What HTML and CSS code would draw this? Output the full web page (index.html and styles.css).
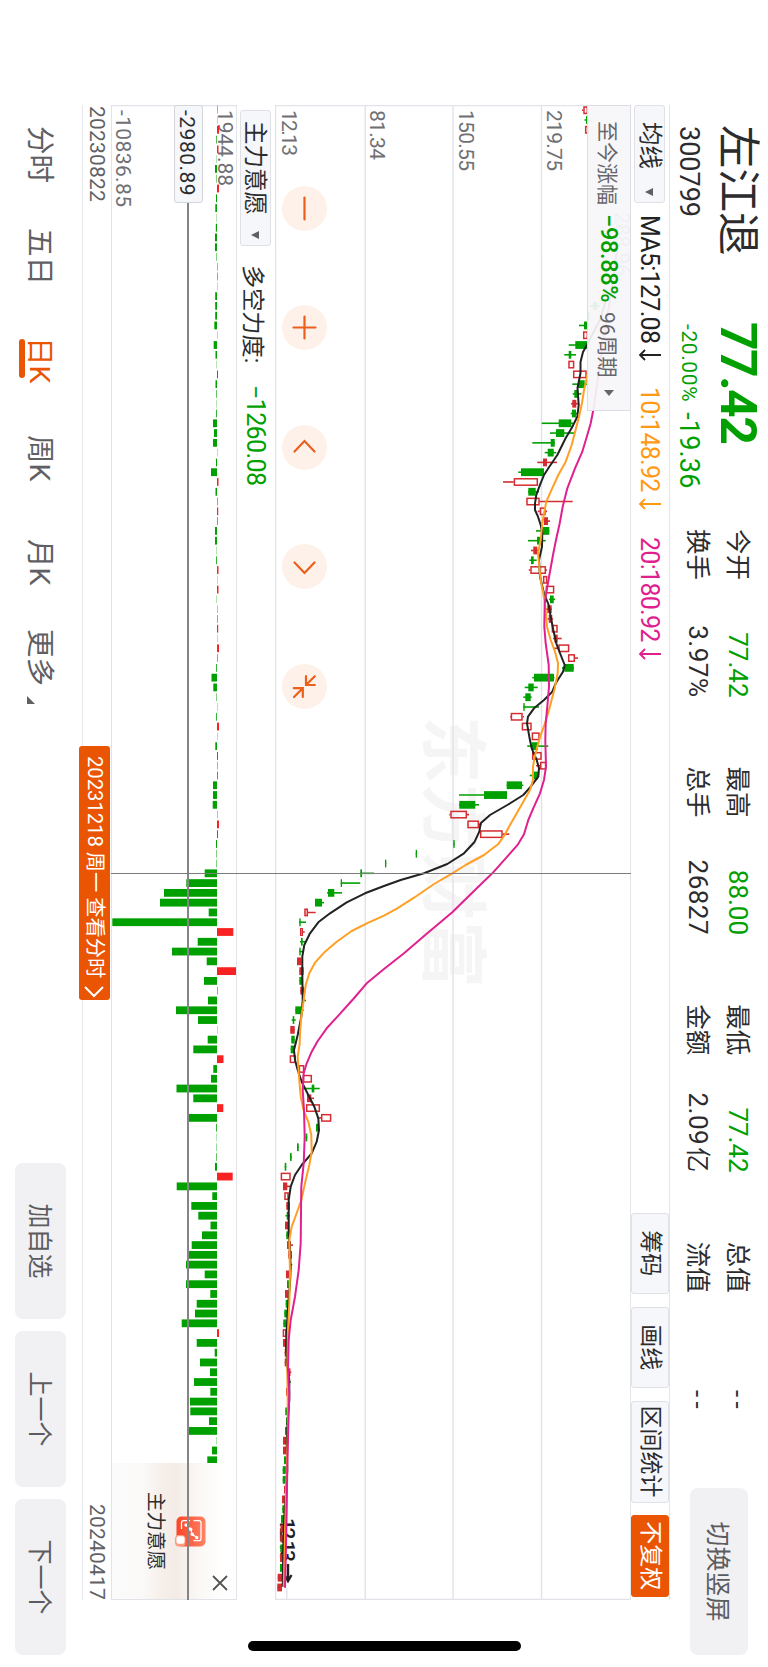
FILE: index.html
```html
<!DOCTYPE html>
<html lang="zh-CN">
<head>
    <meta charset="UTF-8">
    <meta name="viewport" content="width=device-width, initial-scale=1.0">
    <title>左江退 300799</title>
    <link rel="stylesheet" href="styles.css">
</head>
<body>
    <div class="phone">
    <div class="screen">
        <header class="header">
            <div class="stock">
                <div class="stock-name">左江退</div>
                <div class="stock-code">300799</div>
            </div>
            <div class="quote green">
                <div class="price">77.42</div>
                <div class="change"><span class="percent">-20.00%</span><span>-19.36</span></div>
            </div>
            <div class="stats">
                <div class="stat"><span>今开</span><span class="green">77.42</span></div>
                <div class="stat"><span>最高</span><span class="green">88.00</span></div>
                <div class="stat"><span>最低</span><span class="green">77.42</span></div>
                <div class="stat"><span>总值</span><span class="empty">--</span></div>
                <div class="stat"><span>换手</span><span class="spaced">3.97%</span></div>
                <div class="stat"><span>总手</span><span class="spaced">26827</span></div>
                <div class="stat"><span>金额</span><span class="spaced">2.09<span class="unit">亿</span></span></div>
                <div class="stat"><span>流值</span><span class="empty">--</span></div>
            </div>
            <button class="gray-button switch-button">切换竖屏</button>
        </header>

        <main class="main">
            <div class="toolbar">
                <button class="select">均线<i class="caret"></i></button>
                <div class="ma ma5">MA5:127.08<svg width="12" height="24" viewBox="0 0 12 24"><path d="M6 1V22M1 17L6 22L11 17"/></svg></div>
                <div class="ma ma10">10:148.92<svg width="12" height="24" viewBox="0 0 12 24"><path d="M6 1V22M1 17L6 22L11 17"/></svg></div>
                <div class="ma ma20">20:180.92<svg width="12" height="24" viewBox="0 0 12 24"><path d="M6 1V22M1 17L6 22L11 17"/></svg></div>
                <div class="tools">
                    <button class="tool">筹码</button>
                    <button class="tool">画线</button>
                    <button class="tool wide">区间统计</button>
                    <button class="tool active">不复权</button>
                </div>
            </div>

            <div class="chart">
                <svg id="kline" width="1495" height="356" viewBox="105 137 1495 356">
                    <text class="watermark" x="716" y="339" textLength="272">东方财富</text>
                    <g class="grid">
                        <path d="M105 137.2H1600M105 226.5H1600M105 315H1600M105 402.7H1600M105 492.5H1600M105.5 137V493M1599.5 137V493M1588 481.3H1600"/>
                    </g>
                    <g class="axis">
                        <text x="110" y="221" textLength="61">219.75</text>
                        <text x="110" y="309" textLength="61">150.55</text>
                        <text x="110" y="398" textLength="50">81.34</text>
                        <text x="110" y="486" textLength="46">12.13</text>
                    </g>
                    <text class="mark faint" x="212" y="153" textLength="64">288.96</text>
                    <text class="mark" x="1518" y="488" textLength="44">12.13</text>
                    <path class="mark-arrow" d="M1564 480H1580M1575 476.5L1581 480L1575 483.5"/>
                    <g id="candles"></g>
                    <g id="lines"></g>
                </svg>
                <div class="range">
                    <span>至今涨幅</span><b class="green">−98.88%</b><span>96周期</span><i class="next"></i>
                </div>
                <div class="zoom">
                    <svg width="45" height="45" viewBox="-22.5 -22.5 45 45"><path d="M-11 0H11"/></svg>
                    <svg width="45" height="45" viewBox="-22.5 -22.5 45 45"><path d="M-11 0H11M0 -11V11"/></svg>
                    <svg width="45" height="45" viewBox="-22.5 -22.5 45 45"><path d="M4 -10L-6.5 0L4 10"/></svg>
                    <svg width="45" height="45" viewBox="-22.5 -22.5 45 45"><path d="M-4 -10L6.5 0L-4 10"/></svg>
                    <svg width="45" height="45" viewBox="-22.5 -22.5 45 45"><path d="M-10.3 -1.5H-1.5V-10.3M-10.3 -10.3L-1.5 -1.5M1.7 10.7V1.7H10.5M10.5 10.5L1.7 1.7"/></svg>
                </div>
            </div>

            <div class="toolbar sub-toolbar">
                <button class="select">主力意愿<i class="caret"></i></button>
                <span class="force-label">多空力度:</span>
                <span class="force green">−1260.08</span>
            </div>

            <div class="chart">
                <svg id="force" width="1495" height="126" viewBox="105 531 1495 126">
                    <g class="grid">
                        <path d="M105 531.2H1600M105 656.7H1600M105.5 531V657M1599.5 531V657"/>
                    </g>
                    <g class="axis">
                        <text x="110" y="550" textLength="76">1944.88</text>
                        <text x="110" y="652" textLength="97">-10836.85</text>
                    </g>
                    <g id="bars"></g>
                </svg>
                <div class="promo">
                    <svg class="promo-icon" width="31" height="31" viewBox="0 0 31 31">
                        <defs>
                            <linearGradient id="fire" x1="0" y1="0" x2="0" y2="1">
                                <stop offset="0" stop-color="#ff8264"/>
                                <stop offset="1" stop-color="#fb4428"/>
                            </linearGradient>
                        </defs>
                        <rect x="0.5" y="0.5" width="30" height="29" rx="5" fill="url(#fire)"/>
                        <path d="M4.7 16V22.5Q4.7 24.5 7 24.5H13M4.7 12.5V7Q4.7 5 7 5H22.5Q24.7 5 24.7 7V12.5" fill="none" stroke="#fff" stroke-width="1.3"/>
                        <path d="M9 20L13.3 15.3L18.3 13.7L21.5 9.3" fill="none" stroke="#fff" stroke-width="1.1"/>
                        <circle cx="9" cy="20" r="1.7" fill="#fff"/><circle cx="13.3" cy="15.3" r="1.7" fill="#fff"/>
                        <circle cx="18.3" cy="13.7" r="1.7" fill="#fff"/><circle cx="21.5" cy="9.3" r="1.7" fill="#fff"/>
                        <rect x="19" y="20.5" width="11.5" height="10.5" rx="4" fill="#ff9c80"/>
                        <rect x="20.3" y="21.5" width="7.5" height="8" rx="2" fill="#fff"/>
                    </svg>
                    <span>主力意愿</span>
                    <svg class="close" width="16" height="16" viewBox="0 0 16 16"><path d="M1 1L15 15M15 1L1 15"/></svg>
                </div>
                <div class="cross-line"></div>
                <div class="cross-value">-2980.89</div>
            </div>

            <div class="dates">
                <span>20230822</span><span>20240417</span>
                <div class="day-tag">20231218 周一 查看分时<svg width="12" height="20" viewBox="0 0 12 20"><path d="M1 1L10 10L1 19"/></svg></div>
            </div>
            <div class="cross-day"></div>
        </main>

        <footer class="footer">
            <nav class="tabs">
                <span>分时</span>
                <span>五日</span>
                <span class="current">日K</span>
                <span>周K</span>
                <span>月K</span>
                <span>更多<i class="corner"></i></span>
            </nav>
            <div class="actions">
                <button class="gray-button">加自选</button>
                <button class="gray-button">上一个</button>
                <button class="gray-button">下一个</button>
            </div>
        </footer>

        <div class="home-bar"></div>
    </div>
    </div>
    <script src="script.js"></script>
</body>
</html>
```
FILE: styles.css
```css
body {
    margin: 0;
    background-color: #fff;
}
.phone {
    position: relative;
    width: 768px;
    height: 1667px;
    overflow: hidden;
}
/* landscape layout, turned a quarter clockwise */
.screen {
    position: relative;
    width: 1667px;
    height: 768px;
    transform-origin: 0 0;
    transform: translateX(768px) rotate(90deg);
    background-color: #fff;
    color: #2c2c2e;
    font-family: Roboto, "Noto Sans CJK SC", sans-serif;
    font-size: 26px;
}
button {
    margin: 0;
    padding: 0;
    border: none;
    color: inherit;
    font-family: inherit;
}
.green {
    color: #00a000;
}

.header {
    display: flex;
    box-sizing: border-box;
    height: 98px;
    padding: 6px 12px 0 125px;
}
.stock {
    width: 197px;
}
.stock-name {
    font-size: 43.5px;
    line-height: 49px;
    height: 49px;
}
.stock-code {
    padding-left: 1px;
    font-size: 27px;
    line-height: 49px;
}
.quote {
    width: 207px;
}
.price {
    font-size: 50px;
    font-weight: bold;
    line-height: 49px;
    letter-spacing: -1.6px;
}
.change {
    display: flex;
    gap: 10px;
    padding-left: 2px;
    font-size: 27px;
    line-height: 49px;
    letter-spacing: 0.2px;
}
.percent {
    font-size: 21px;
    letter-spacing: 0.6px;
}
.stats {
    display: grid;
    grid-template-columns: repeat(4, 168.5px);
    grid-template-rows: 39.5px 39.5px;
    column-gap: 69.1px;
    padding-top: 5px;
}
.stat {
    display: flex;
    justify-content: space-between;
    font-size: 26px;
    line-height: 39.5px;
}
.stat > span:first-child {
    font-size: 25.5px;
}
.spaced {
    letter-spacing: 0.5px;
}
.unit {
    margin-left: 2px;
    font-size: 25px;
}
.empty {
    letter-spacing: 4.5px;
    margin-right: -3px;
}
.gray-button {
    padding-bottom: 2px;
    background-color: #f1f1f4;
    border-radius: 8px;
    color: #5c5c60;
    font-size: 25px;
}
.switch-button {
    width: 167px;
    height: 58px;
    margin: 14px 0 0 auto;
}

.main {
    position: relative;
    width: 1495px;
    margin-left: 105px;
}
.toolbar {
    display: flex;
    align-items: center;
    box-sizing: border-box;
    height: 39px;
    border-top: 1px solid #e4e4ea;
}
.select {
    display: flex;
    align-items: center;
    justify-content: space-between;
    box-sizing: border-box;
    width: 98px;
    height: 31px;
    padding: 1px 6px 0 16px;
    background-color: #f6f7fa;
    border: 1px solid #dfe1e6;
    border-radius: 3px;
    font-size: 23.5px;
    line-height: 29px;
}
.caret {
    border: 4.5px solid transparent;
    border-top: 8px solid #606064;
    border-bottom: none;
}
.ma {
    display: flex;
    align-items: center;
    gap: 6px;
    font-size: 25px;
    line-height: 37px;
    width: 150px;
    letter-spacing: -0.7px;
}
.ma svg {
    fill: none;
    stroke: currentColor;
    stroke-width: 1.8;
}
.ma5 {
    margin-left: 12px;
    width: 172px;
    color: #222;
}
.ma10 {
    color: #ff9a17;
}
.ma20 {
    color: #e0208f;
}
.tools {
    display: flex;
    gap: 12.5px;
    margin-left: auto;
    margin-right: 3.5px;
}
.tool {
    box-sizing: border-box;
    width: 81.5px;
    height: 38px;
    background-color: #f6f7fa;
    border: 1px solid #dfe1e6;
    border-radius: 3px;
    font-size: 23px;
    line-height: 34px;
}
.tool.wide {
    width: 102px;
}
.tool.active {
    background-color: #ea5504;
    border-color: #ea5504;
    color: #fff;
}

.chart {
    position: relative;
}
.chart > svg {
    display: block;
}
.grid path {
    fill: none;
    stroke: #e2e2e9;
    stroke-width: 1.4;
}
.axis text {
    fill: #707074;
    font-size: 21px;
}
.mark {
    fill: #222;
    font-size: 21px;
    font-weight: 500;
}
.mark.faint {
    fill: #999;
    font-weight: normal;
}
.mark-arrow {
    fill: none;
    stroke: #222;
    stroke-width: 2.4;
}
.watermark {
    fill: #f5f5f6;
    font-size: 67px;
    font-weight: bold;
}
#lines polyline {
    fill: none;
    stroke-width: 2;
    stroke-linejoin: round;
}
.range {
    position: absolute;
    top: 0;
    left: 0;
    display: flex;
    align-items: center;
    box-sizing: border-box;
    width: 306px;
    height: 44px;
    padding-left: 15px;
    background-color: rgba(246, 246, 250, 0.93);
    border: 1px solid #dcdce4;
    color: #66666a;
    font-size: 21px;
}
.range b {
    width: 90px;
    margin: 0 8px 0 9px;
    font-size: 23.5px;
    font-weight: 500;
    letter-spacing: -0.3px;
}
.next {
    margin-left: 12px;
    border: 5px solid transparent;
    border-left: 6px solid #66666a;
    border-right: none;
}
.zoom {
    position: absolute;
    top: 304px;
    left: 80.5px;
    display: flex;
    gap: 74.5px;
}
.zoom svg {
    background-color: #fef1ea;
    border-radius: 50%;
    fill: none;
    stroke: #ea5f1c;
    stroke-width: 2.2;
    stroke-linecap: round;
}

.sub-toolbar {
    height: 38px;
    padding-left: 5px;
    border-top: none;
}
.sub-toolbar .select {
    width: 136px;
    padding: 2px 6px 0 10px;
}
.force-label {
    width: 120px;
    margin-left: 19px;
    padding-top: 2px;
    font-size: 23.2px;
}
.force {
    padding-top: 1px;
    font-size: 25px;
    letter-spacing: -0.6px;
}
.cross-line {
    position: absolute;
    top: 48px;
    left: 98px;
    right: 0;
    height: 2px;
    background-color: #858587;
}
.cross-value {
    position: absolute;
    top: 34px;
    left: 0;
    box-sizing: border-box;
    width: 98px;
    height: 29px;
    padding-left: 4px;
    background-color: #f6f7fa;
    border: 1px solid #d4d6de;
    border-radius: 3px;
    font-size: 21px;
    line-height: 30px;
    letter-spacing: 0.5px;
}
.cross-day {
    position: absolute;
    top: 39px;
    left: 767.5px;
    width: 1.6px;
    height: 520px;
    background-color: #7c7c7e;
}
.promo {
    position: absolute;
    top: 1px;
    right: 1px;
    display: flex;
    flex-direction: column;
    align-items: center;
    box-sizing: border-box;
    width: 136px;
    height: 124px;
    padding-top: 30px;
    background: linear-gradient(#fff 10%, #fbf8f6 30%, #f4ebe6 48%, #f6efea 60%, #fbf9f8 75%, #fbfbfb);
    font-size: 19.5px;
    line-height: 39px;
}
.promo-icon {
    margin-right: -1px;
}
.close {
    position: absolute;
    top: 8px;
    right: 8px;
    stroke: #555;
    stroke-width: 1.8;
}
.dates {
    position: relative;
    display: flex;
    justify-content: space-between;
    box-sizing: border-box;
    height: 29px;
    padding-left: 1px;
    border-bottom: 1px solid #e6e6ec;
    color: #606064;
    font-size: 21px;
    line-height: 29px;
    letter-spacing: 0.2px;
}
.day-tag {
    position: absolute;
    top: 1px;
    left: 641px;
    display: flex;
    align-items: center;
    gap: 8px;
    box-sizing: border-box;
    width: 254px;
    height: 31px;
    padding-left: 10px;
    background-color: #ea5504;
    border-radius: 3px;
    color: #fff;
    font-size: 20.3px;
    letter-spacing: -0.05px;
    white-space: nowrap;
}
.day-tag svg {
    fill: none;
    stroke: #fff;
    stroke-width: 2;
}

.footer {
    display: flex;
    justify-content: space-between;
    align-items: center;
    height: 82px;
    padding: 0 12px 0 126px;
}
.tabs {
    display: grid;
    grid-template-columns: 102px 109px 98px 104px 90px 90px;
    padding-top: 3px;
    color: #606064;
    font-size: 28.5px;
    line-height: 38px;
}
.tabs span {
    white-space: nowrap;
}
.tabs .current {
    position: relative;
    color: #ea5504;
}
.current::after {
    content: "";
    position: absolute;
    left: 2px;
    bottom: -1px;
    width: 39px;
    height: 6px;
    border-radius: 3px;
    background-color: #ea5504;
}
.corner {
    display: inline-block;
    margin-left: 10px;
    border-left: 8px solid transparent;
    border-bottom: 8px solid #606064;
    vertical-align: -3px;
}
.actions {
    display: flex;
    gap: 12px;
}
.actions .gray-button {
    width: 156px;
    height: 51px;
}
.home-bar {
    position: absolute;
    top: 247px;
    left: 1641px;
    width: 10px;
    height: 273px;
    border-radius: 5px;
    background-color: #000;
}
```
FILE: script.js
```javascript
const NS = 'http://www.w3.org/2000/svg';
const STEP = 9.783;
const CENTER = 873.3; // x of the selected day
const GREEN = '#00a000';
const RED = '#d42c30';

// day, type (g = down, r = up, s = up and too small to be hollow), body low, body high, low, high
const candles = [
    [-78, 'r', 583.3, 588, 582, 589], [-77, 'g', 586, 588.5, 584.5, 590], [-76, 'r', 585, 589],
    [-58, 'g', 593, 597, 590, 600], [-57, 'g', 588, 589.5],
    [-56, 'g', 584, 587, 579, 588], [-55, 'r', 583, 588], [-54, 'g', 575.3, 588, 568.7, 588],
    [-53, 'g', 568.7, 571.3, 564.3, 576], [-52, 'r', 568.3, 574.3], [-51, 'r', 573, 586.7],
    [-50, 'g', 578, 584.7, 572.3, 589], [-49, 'g', 574.3, 578.3, 572.7, 581.3], [-48, 's', 572.3, 576.3, 571, 578],
    [-47, 'g', 572, 576, 570.7, 577.7], [-46, 'g', 558.7, 571.3, 541.7, 573], [-45, 'g', 556, 564.3, 550, 574.7],
    [-44, 'g', 550.7, 554.7, 532.3, 555], [-43, 'g', 547.7, 553.7, 544.7, 556.3], [-42, 's', 543, 547, 537.3, 557],
    [-41, 'g', 521, 544, 518.3, 544], [-40, 'r', 513.7, 538, 503, 538], [-39, 'g', 528.3, 535.7, 528, 539],
    [-38, 'r', 526.3, 539.7, 526, 572.7], [-37, 'r', 539.7, 545.7, 537.7, 547], [-36, 's', 544, 548, 544, 550],
    [-35, 'g', 541.7, 549.3, 536, 549.3], [-34, 'g', 537, 541.3, 528, 545.7], [-33, 's', 533.3, 537.3, 531, 538],
    [-32, 'g', 531, 533.7, 529.3, 536.7], [-31, 'r', 530.3, 546, 528.7, 547], [-30, 'r', 543, 547.3],
    [-29, 'r', 545.7, 554.3], [-28, 'g', 550, 553.7, 549, 555], [-27, 's', 547.3, 551.7, 544.7, 552],
    [-26, 's', 548.7, 552.3, 547.5, 553], [-25, 'r', 551.7, 557.7], [-24, 's', 554.3, 557.7, 553, 561.7],
    [-23, 'r', 558.3, 569.3, 553, 569.3], [-22, 'r', 568, 575, 568, 578], [-21, 'g', 564.3, 573.7, 562, 574],
    [-20, 'g', 534, 554, 532.3, 554.5], [-19, 'g', 528.3, 533.7, 524.7, 537.7], [-18, 'g', 525.3, 530.7, 523.3, 531.7],
    [-17, 'g', 523.3, 524.7, 523.3, 539], [-16, 'r', 510.7, 522.7, 510, 524], [-15, 'r', 521.7, 531.7],
    [-14, 'r', 531.7, 539.7], [-13, 'g', 531.7, 538, 527.3, 548.3], [-12, 'r', 532, 541.7],
    [-11, 'r', 540, 546.3, 536, 547], [-10, 'g', 533.3, 538, 529.7, 538], [-9, 'g', 506.7, 522, 506.7, 523.3],
    [-8, 'g', 484, 507, 459, 507], [-7, 'g', 459.3, 475.3, 459, 479], [-6, 'r', 450.3, 467, 449.3, 469],
    [-5, 'r', 467.3, 479, 467, 481.7], [-4, 'r', 480, 502.7, 480, 509.3], [-3, 'g', 453.3, 454.7],
    [-2, 'g', 415.7, 417], [-1, 'g', 385, 386.3], [0, 'g', 360.3, 362, 360, 374],
    [1, 'g', 340.7, 342, 340.7, 360.3], [2, 'g', 328, 334.3, 327, 342], [3, 'g', 315, 322, 315, 324],
    [4, 'r', 304.3, 308, 304, 315.7], [5, 'g', 299.3, 300.7, 299, 306], [6, 'r', 300, 303, 300, 304.7],
    [7, 'g', 301, 302.7, 300, 305], [8, 'g', 299.3, 300.7, 299, 303], [9, 's', 297, 301.3],
    [10, 's', 299.3, 303.7], [11, 'g', 299.3, 302.7], [12, 's', 300.3, 304], [13, 'g', 303, 304, 302, 306],
    [14, 'g', 295.3, 301.3, 295.3, 303.7], [15, 'g', 292.7, 294.3, 291.7, 295.7], [16, 's', 290.3, 294.7],
    [17, 'g', 291.3, 294.7], [18, 'g', 290.7, 294], [19, 'r', 289.7, 296], [20, 'r', 298.7, 304.3],
    [21, 'r', 302.7, 312], [22, 'g', 311.7, 314.3, 302.7, 319.7], [23, 's', 307, 311.3, 307, 314],
    [24, 'r', 306, 320], [25, 'r', 321, 331.3, 317.7, 331.3], [26, 'g', 316, 318.3], [27, 'g', 305.7, 307.3],
    [28, 'g', 297, 298.7], [29, 'g', 290, 291.7], [30, 'g', 284.7, 286.3], [31, 'r', 280.7, 290.7],
    [32, 's', 283, 287.3, 283, 290.7], [33, 'r', 284.3, 288.7], [34, 's', 286.3, 290], [35, 'g', 286.7, 288.7, 285.5, 290],
    [36, 's', 285, 288.7], [37, 'g', 286.3, 289.3], [38, 's', 287, 291, 287, 293], [39, 's', 288.3, 292],
    [40, 'g', 289.7, 291, 289, 292.3], [41, 's', 286, 289.3], [42, 'g', 287, 290], [43, 's', 285, 289],
    [44, 'g', 285.7, 289], [45, 'g', 284.3, 287.3], [46, 'g', 283.3, 286.3], [47, 'r', 282.7, 286.5],
    [48, 's', 283, 286.7], [49, 's', 284.7, 287.3], [50, 's', 284.7, 287.3], [51, 's', 288, 290.5, 287, 291.3],
    [52, 'g', 289, 290, 288.5, 291], [53, 's', 286, 288], [55, 'g', 285.3, 288], [56, 'g', 286, 288],
    [57, 'g', 285, 287.5], [58, 's', 283, 286.7], [59, 's', 283, 286.7], [60, 'g', 284, 287],
    [61, 'g', 282.7, 286], [62, 'g', 282.7, 286], [63, 's', 284, 287], [64, 's', 282, 285.7],
    [65, 'g', 282.3, 285], [66, 'g', 281, 284.3], [67, 's', 280.5, 284], [68, 's', 280.5, 284],
    [69, 'g', 280.3, 284], [70, 's', 280, 284], [71, 'g', 280, 283], [72, 's', 277.7, 282], [73, 's', 277.3, 282]
];

const ma5 = '300,606 320,600 335,592 345,587 352,583 362,580.5 373,580.5 388,577.5 405,578.7 416.7,577.3 428,571.7 438,565.7 455,557.3 466.7,549.3 475,544 485.7,539.7 495,536.3 503.3,535 510,535 516.7,538 525,540.7 533.3,542.3 546.7,542 560,539 576.7,540 593.3,544 605,548.7 616.7,550.7 630,553.3 643.3,556.3 655,560.7 665,564.7 671.7,563 683.3,555.7 691.7,552.3 700,544 708.3,534 716.7,528 723.3,527 736.7,529.3 748.3,531.7 760,536.7 768.3,539 776.7,538.3 786.7,530.7 795,523.3 805,507.3 815,490 823.3,480.7 831.7,479.3 841.7,474.7 853.3,464 864,447.3 873.3,424 880,400.7 886,384 893.3,365 902.3,346.7 913.3,330 922.3,318.3 933.3,310 945,304.3 956.7,302.3 973.3,302.3 1000,302.7 1016.7,301.3 1035,297.7 1050,294 1060,295 1070,297.7 1081.7,301.7 1095,308.3 1106.7,314.3 1118.3,318.3 1130,319 1141.7,316.7 1153.3,311.7 1165,301.7 1175,295 1186.7,290.7 1200,288.7 1233.3,288.7 1253.3,290 1266.7,290.7 1283.3,290 1306.7,288 1330,286.7 1346.7,286 1370,287.7 1380,289.3 1400,289.3 1420,287.7 1443.3,286.7 1470,287.3 1493.3,286 1520,284 1546.7,283.3 1586.7,282.7';
const ma10 = '373,588 390,584 403,582 416.7,579 433.3,574.7 445,571.7 461.7,565.7 475,558.3 491.7,550.7 501.7,546.3 510,544.7 523.3,542.3 540,540.7 553.3,538 566.7,539.3 580,540.7 593.3,543.3 606.7,545.3 626.7,547 640,550.7 651.7,555 663.3,558 673.3,557.7 688.3,554.7 710,549 723.3,545 735,540.7 746.7,537.3 756.7,534.7 766.7,533 780,533 790,530 801.7,523.3 815,515.7 826.7,509 835,504.7 844.3,498 855,484 865,465.7 873.3,452.3 884,434 897.7,414 908.3,397.3 915.7,384 922.7,368.3 931,351.7 941.7,336.7 951.7,325 962.7,315 973.3,309.3 985,305.7 1000,303.7 1016.7,301.3 1033.3,300 1043.3,299.7 1056.7,297.7 1073.3,298.7 1096.7,300.7 1111.7,304 1121.7,308.3 1135,311.3 1151.7,311.7 1165,309.3 1183.3,305 1200,301.3 1215,296 1226.7,291.7 1240,289.3 1273.3,290 1303.3,289.3 1330,288 1370,287.3 1426.7,288 1493.3,286 1546.7,284.7 1586.7,283.7';
const ma20 = '250,617 300,610 350,602 410,593.3 423.3,590.7 435,587.3 451.7,582.3 468.3,575 488.3,567.3 506.7,562.7 523.3,559.7 540,556 555,553 573.3,549.7 590,546.7 603.3,544.7 626.7,544.3 643.3,545.7 665,548.7 686.7,549 706.7,547.3 723.3,545.7 740,545.3 766.7,546 780,544 793.3,540 806.7,534 820,528.3 834.3,524 844.3,518 858.3,505.7 873.3,492.3 887.7,477.3 912.3,452.3 933.3,427.3 953.3,404 969,384 983.3,366.7 999,353.3 1015.7,338.3 1028.3,326.7 1041,317.7 1051.7,311.7 1063.3,306.7 1073.3,303.7 1090,302.7 1110,304 1136.7,304.7 1163.3,303.7 1186.7,301.3 1213.3,301 1243.3,300.7 1270,298.7 1296.7,295 1320,290.7 1340,288.7 1370,288 1393.3,289.3 1426.7,288.3 1466.7,287.3 1510,286.7 1546.7,286 1587.7,285';

// one value per day from day -79 on, in pixels from the zero line
const force = [
    0.3, 0.2, 0.2, 2, -0.7, 1.5, -0.2, -2, -0.5, 2, -1, -1.7, -0.3, -1.2, -2, -2, -0.5, 0.5, 0.6, 0.3,
    -1.8, -1.8, -1.8, -2.7, 0.2, -3.3, -1.5, -0.3, 1, -1.5, -0.6, -0.2, -0.8, -4, -3, -4, 0.2, -1, -6, 1.5,
    -1.5, 0.6, 1.2, 0.7, -2, -2, -0.2, -0.8, 1.5, 0.3, 1.5, -0.1, 0.4, 0.6, 1.2, 0.2, 2, 0.6, -0.8, -5.5,
    -3.7, -0.5, 0.2, -0.8, 2, 0.2, -1.7, 1, 0.5, 0.8, -4, -4, -4.3, 0.4, 2, 1, -1, -0.5, -0.5, -12.3,
    -30.7, -53, -57, -8.3, -104.7, 16.3, -19.3, -45, -10.3, 19, -13, 0.6, -9, -41, -19, 0.1, -9.3, -23.7, 6.5, -3.7,
    -6, -40.5, -23.7, 6.3, -28.7, -0.8, -0.2, -0.4, -0.6, -2, 15.7, -40.3, -4.7, -25.7, -18.7, -6.5, -15, -25.3, -28.7, -31,
    -12.3, -31, -6.7, -20.3, -22, -35.3, 2, -20.3, -2.3, -17, -7, -23, -6.7, -27, -26.7, -8, -29.3, -0.2, -5, -9.7
];

function add(parent, name, attrs) {
    const el = document.createElementNS(NS, name);
    for (const key in attrs) {
        el.setAttribute(key, attrs[key]);
    }
    parent.appendChild(el);
}

const candleGroup = document.getElementById('candles');
candles.forEach(([day, type, lo, hi, low = lo, high = hi]) => {
    const x = CENTER + day * STEP;
    const color = type === 'g' ? GREEN : RED;
    if (type === 'r') {
        add(candleGroup, 'path', {
            d: `M${x} ${768 - low}V${768 - lo}M${x} ${768 - hi}V${768 - high}`,
            stroke: color, 'stroke-width': 1.6
        });
        add(candleGroup, 'rect', {
            x: x - 3.2, y: 768 - hi + 0.7, width: 6.4, height: Math.max(hi - lo - 1.4, 1),
            fill: 'none', stroke: color, 'stroke-width': 1.5
        });
    } else {
        add(candleGroup, 'path', { d: `M${x} ${768 - low}V${768 - high}`, stroke: color, 'stroke-width': 1.6 });
        add(candleGroup, 'rect', { x: x - 3.9, y: 768 - hi, width: 7.8, height: hi - lo, fill: color });
    }
});

const lineGroup = document.getElementById('lines');
[[ma5, '#222'], [ma10, '#ff9f24'], [ma20, '#e0208f']].forEach(([data, color]) => {
    const points = data.split(' ').map(p => {
        const [x, level] = p.split(',');
        return x + ',' + (768 - level);
    });
    add(lineGroup, 'polyline', { points: points.join(' '), stroke: color });
});

const barGroup = document.getElementById('bars');
force.forEach((value, i) => {
    const x = Math.max(CENTER + (i - 79) * STEP, 109);
    const size = Math.max(Math.abs(value), 0.3);
    add(barGroup, 'rect', {
        x: x - 3.9, y: value > 0 ? 551 - size : 551, width: 7.8, height: size,
        fill: value > 0 ? '#f82222' : GREEN
    });
});
```
